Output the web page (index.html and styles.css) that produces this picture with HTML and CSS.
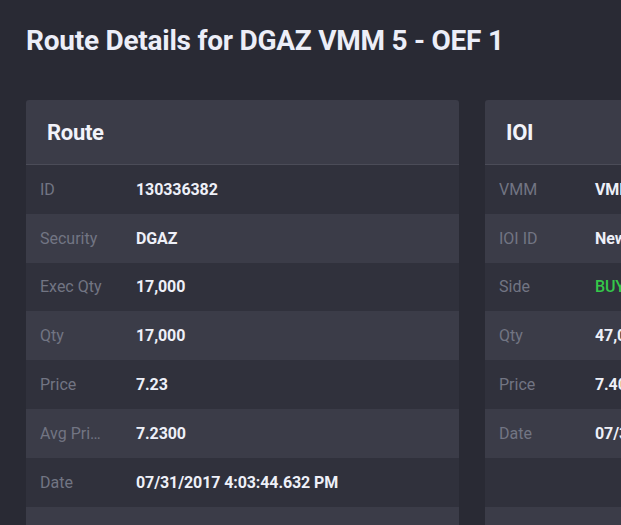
FILE: index.html
```html
<!DOCTYPE html>
<html>
<head>
<meta charset="utf-8">
<link rel="stylesheet" href="styles.css">
</head>
<body>
<div class="page">
  <h1 class="title">Route Details for DGAZ VMM 5 - OEF 1</h1>
  <div class="cards">
    <section class="card">
      <header class="card-head">Route</header>
      <div class="rows">
        <div class="row"><span class="label">ID</span><span class="value">130336382</span></div>
        <div class="row"><span class="label">Security</span><span class="value">DGAZ</span></div>
        <div class="row"><span class="label">Exec Qty</span><span class="value">17,000</span></div>
        <div class="row"><span class="label">Qty</span><span class="value">17,000</span></div>
        <div class="row"><span class="label">Price</span><span class="value">7.23</span></div>
        <div class="row"><span class="label">Avg Price</span><span class="value">7.2300</span></div>
        <div class="row"><span class="label">Date</span><span class="value">07/31/2017 4:03:44.632 PM</span></div>
        <div class="row"><span class="label"></span><span class="value"></span></div>
      </div>
    </section>
    <section class="card">
      <header class="card-head">IOI</header>
      <div class="rows">
        <div class="row"><span class="label">VMM</span><span class="value">VMM 5</span></div>
        <div class="row"><span class="label">IOI ID</span><span class="value">New</span></div>
        <div class="row"><span class="label">Side</span><span class="value buy">BUY</span></div>
        <div class="row"><span class="label">Qty</span><span class="value">47,000</span></div>
        <div class="row"><span class="label">Price</span><span class="value">7.40</span></div>
        <div class="row"><span class="label">Date</span><span class="value">07/31/2017 4:03:44.632 PM</span></div>
        <div class="row"><span class="label"></span><span class="value"></span></div>
        <div class="row"><span class="label"></span><span class="value"></span></div>
      </div>
    </section>
  </div>
</div>
</body>
</html>
```
FILE: styles.css
```css
html, body {
  margin: 0;
  padding: 0;
  background: #292a34;
  overflow: hidden;
}
body {
  font-family: Roboto, "Liberation Sans", sans-serif;
  color: #eef0f8;
}
.page {
  padding: 24px 0 0 26px;
  height: 525px;
  box-sizing: border-box;
  overflow: hidden;
}
.title {
  margin: 0;
  font-size: 28px;
  font-weight: 700;
  line-height: 34px;
  color: #eceef8;
  letter-spacing: -0.25px;
  white-space: nowrap;
}
.cards {
  display: flex;
  gap: 26px;
  margin-top: 42px;
}
.card {
  flex: 0 0 433px;
  width: 433px;
  background: #3b3c48;
  border-radius: 3px;
  overflow: hidden;
}
.card-head {
  height: 65px;
  display: flex;
  align-items: center;
  padding-left: 21px;
  font-size: 22px;
  font-weight: 700;
  color: #f2f3fa;
  border-bottom: 1px solid #4b4c58;
  box-sizing: border-box;
  letter-spacing: -0.3px;
}
.rows {
  display: flex;
  flex-direction: column;
}
.row {
  height: 48.8px;
  display: flex;
  align-items: center;
  padding-left: 14px;
  background: #3b3c48;
}
.row:nth-child(odd) {
  background: #30313c;
}
.label {
  width: 63px;
  flex: 0 0 63px;
  margin-right: 33px;
  font-size: 16px;
  color: #727583;
  white-space: nowrap;
  overflow: hidden;
  text-overflow: ellipsis;
}
.value {
  font-size: 16px;
  font-weight: 700;
  color: #eef0f8;
  white-space: nowrap;
  letter-spacing: -0.1px;
}
.value.buy {
  color: #35c84a;
  font-weight: 500;
}
```
